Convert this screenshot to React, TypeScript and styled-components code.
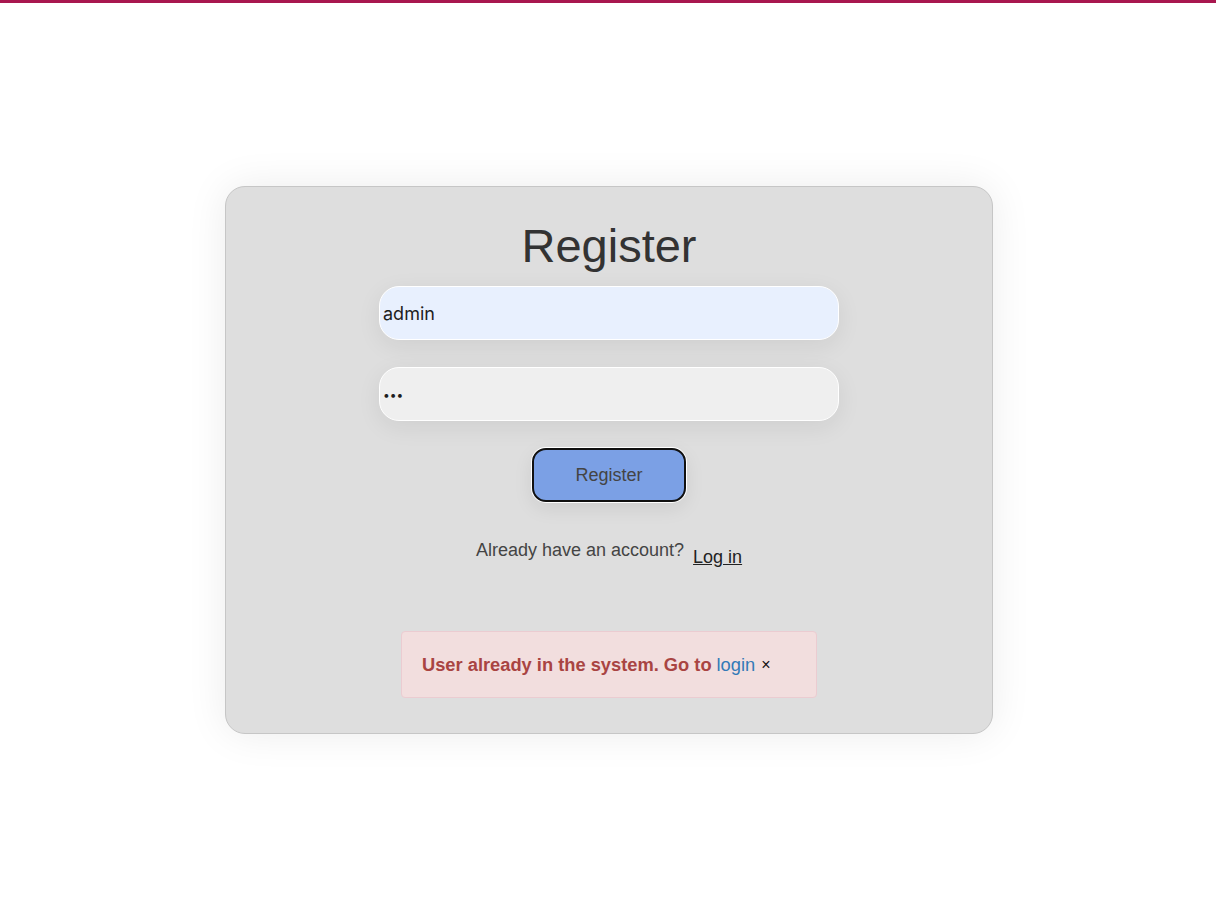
import React from 'react';
import styled, { createGlobalStyle } from 'styled-components';

const GlobalStyle = createGlobalStyle`
  html, body {
    margin: 0;
    padding: 0;
    background: #ffffff;
    font-family: 'Liberation Sans', Arial, sans-serif;
  }
`;

const Page = styled.div`
  min-height: 912px;
  border-top: 3px solid #a8174f;
  box-sizing: border-box;
  display: flex;
  justify-content: center;
  padding: 183px 0 0 2px;
`;

const Card = styled.div`
  width: 768px;
  height: 548px;
  box-sizing: border-box;
  background: #dedede;
  border: 1px solid #c6c6c6;
  border-radius: 20px;
  box-shadow: 0 0 40px rgba(0, 0, 0, 0.08);
  display: flex;
  flex-direction: column;
  align-items: center;
  padding-top: 30px;
`;

const Title = styled.h1`
  margin: 0 0 11px;
  font-size: 47px;
  font-weight: 400;
  color: #333333;
  line-height: 58px;
`;

const Form = styled.form`
  display: flex;
  flex-direction: column;
  align-items: center;
  gap: 27px;
`;

const Input = styled.input<{ $filled?: boolean }>`
  width: 460px;
  height: 54px;
  box-sizing: border-box;
  border: 1px solid #ffffff;
  border-radius: 20px;
  padding: 0 3px;
  background: ${({ $filled }) => ($filled ? '#e8f0fe' : '#efefef')};
  box-shadow: 0 6px 24px rgba(0, 0, 0, 0.07);
  font-family: Inter, 'Liberation Sans', sans-serif;
  font-size: ${({ $filled }) => ($filled ? '18px' : '12px')};
  color: #1e1e1e;
  outline: none;
`;

const Button = styled.button`
  width: 154px;
  height: 54px;
  box-sizing: border-box;
  background: #7ba0e5;
  border: 2px solid #111111;
  border-radius: 14px;
  box-shadow: 0 0 0 1px #ffffff, 0 6px 20px rgba(0, 0, 0, 0.08);
  font-family: 'Liberation Sans', Arial, sans-serif;
  font-size: 18px;
  color: #444444;
  cursor: pointer;
`;

const Prompt = styled.p`
  margin: 38px 0 0;
  font-size: 18px;
  color: #444444;
  display: flex;
  align-items: flex-start;
  gap: 9px;
`;

const LogIn = styled.a`
  color: #222222;
  text-decoration: underline;
  margin-top: 7px;
`;

const Alert = styled.div`
  margin-top: 63px;
  width: 416px;
  height: 67px;
  box-sizing: border-box;
  background: #f2dede;
  border: 1px solid #ebccd1;
  border-radius: 4px;
  padding: 0 20px;
  display: flex;
  align-items: center;
  font-size: 18.3px;
  font-weight: 700;
  color: #a94442;
`;

const AlertLink = styled.a`
  color: #337ab7;
  font-weight: 400;
  text-decoration: none;
  margin-left: 5px;
`;

const Close = styled.span`
  color: #111111;
  font-weight: 400;
  font-size: 16px;
  margin-left: 6px;
`;

export default function App() {
  return (
    <>
      <GlobalStyle />
      <Page>
        <Card>
          <Title>Register</Title>
          <Form onSubmit={(e) => e.preventDefault()}>
            <Input $filled type="text" defaultValue="admin" />
            <Input type="password" defaultValue="123" />
            <Button type="submit">Register</Button>
          </Form>
          <Prompt>
            Already have an account?
            <LogIn href="#">Log in</LogIn>
          </Prompt>
          <Alert>
            User already in the system. Go to
            <AlertLink href="#">login</AlertLink>
            <Close>×</Close>
          </Alert>
        </Card>
      </Page>
    </>
  );
}
